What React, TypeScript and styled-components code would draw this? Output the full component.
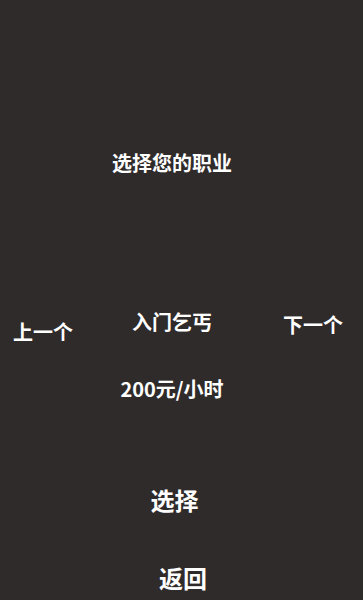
import React from "react";
import styled, { createGlobalStyle } from "styled-components";

const Global = createGlobalStyle`
  html, body { margin: 0; padding: 0; background: #2f2b2b; }
  body { font-family: "Noto Sans CJK SC", "Noto Sans", sans-serif; }
`;

const Screen = styled.div`
  width: 363px;
  height: 600px;
  background: #2f2b2b;
  color: #ffffff;
  display: flex;
  flex-direction: column;
  align-items: center;
  padding-right: 19px;
  box-sizing: border-box;
  overflow: hidden;
`;

const Title = styled.div`
  margin-top: 153px;
  font-size: 20px;
  line-height: 20px;
  font-weight: 700;
`;

const Row = styled.div`
  margin-top: 139px;
  align-self: stretch;
  display: flex;
  align-items: flex-start;
  padding-left: 13px;
`;

const NavButton = styled.div<{ $top: number; $gap: number }>`
  margin-top: ${(p) => p.$top}px;
  margin-left: ${(p) => p.$gap}px;
  font-size: 20px;
  line-height: 20px;
  font-weight: 700;
  white-space: nowrap;
`;

const JobName = styled.div`
  margin-left: 59px;
  font-size: 20px;
  line-height: 20px;
  font-weight: 700;
  white-space: nowrap;
`;

const Price = styled.div`
  margin-top: 37px;
  font-size: 20px;
  line-height: 20px;
  font-weight: 700;
`;

const ActionButton = styled.div<{ $top: number; $shift: number }>`
  margin-top: ${(p) => p.$top}px;
  margin-left: ${(p) => p.$shift}px;
  font-size: 24px;
  line-height: 24px;
  font-weight: 700;
`;

export default function App() {
  return (
    <>
      <Global />
      <Screen>
        <Title>选择您的职业</Title>
        <Row>
          <NavButton $top={10} $gap={0}>上一个</NavButton>
          <JobName>入门乞丐</JobName>
          <NavButton $top={3} $gap={71}>下一个</NavButton>
        </Row>
        <Price>200元/小时</Price>
        <ActionButton $top={89} $shift={5}>选择</ActionButton>
        <ActionButton $top={54} $shift={22}>返回</ActionButton>
      </Screen>
    </>
  );
}
